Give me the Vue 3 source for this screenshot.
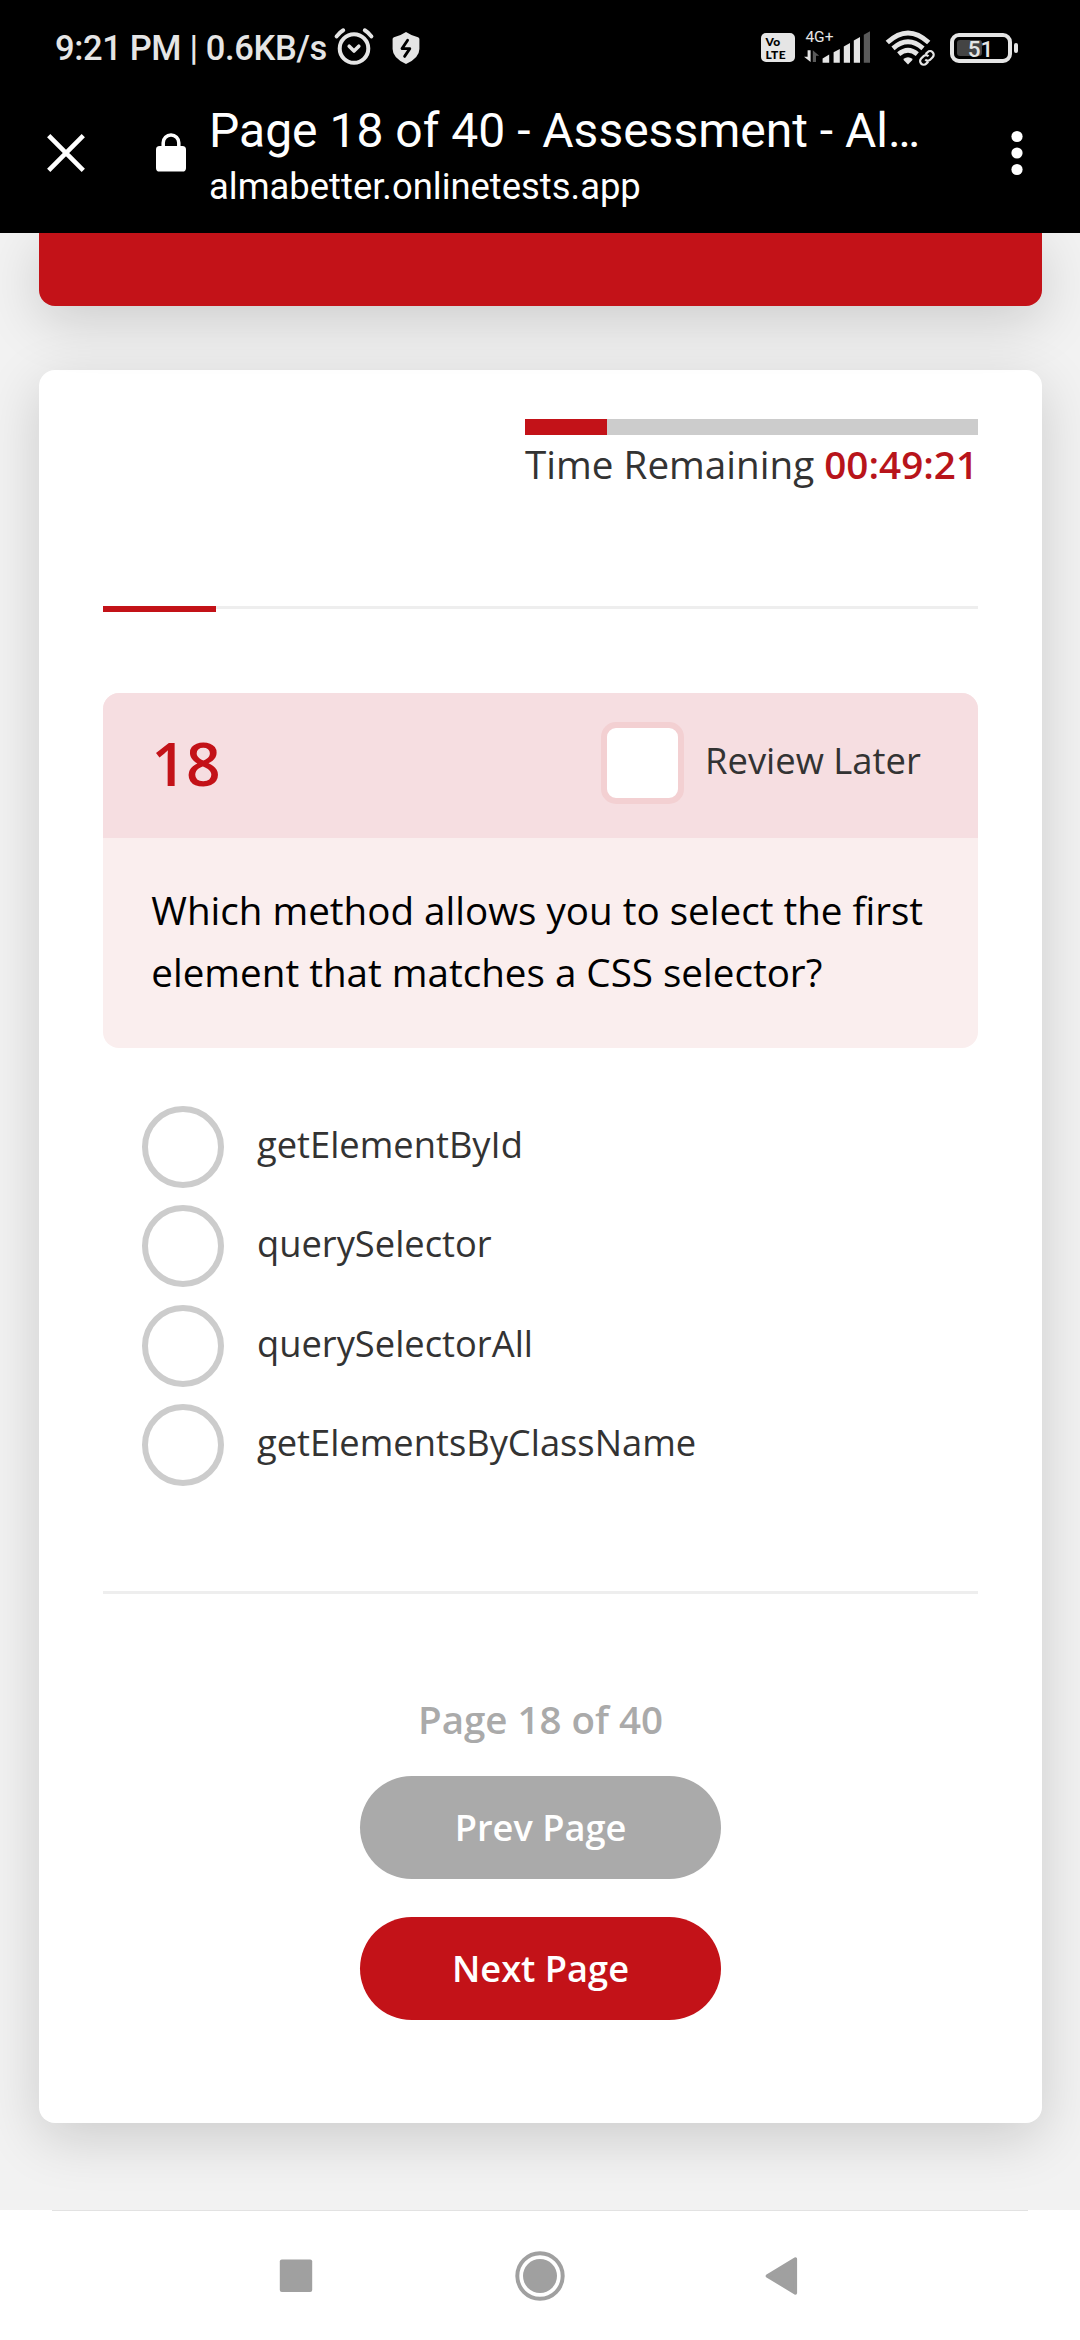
<script setup>
import { ref } from 'vue'

const page = 18
const total = 40
const picked = ref(null)
const reviewLater = ref(false)
const options = ['getElementById', 'querySelector', 'querySelectorAll', 'getElementsByClassName']
const timeUsed = 18.1
const progress = 12.9
</script>

<template>
  <div class="screen">
    <header class="chrome">
      <div class="status">
        <span class="clock">9:21 PM | 0.6KB/s</span>
        <svg class="alarm" width="42" height="40" viewBox="0 0 42 40" fill="none" stroke="#e5e5e5" stroke-width="4" stroke-linecap="round" stroke-linejoin="round">
          <circle cx="21" cy="22.5" r="14.3" />
          <path d="M3.6 10.4Q6.5 6.5 10.2 4.3M38.4 10.4Q35.5 6.5 31.8 4.3" />
          <path d="M16.2 20.2l4.8 4.8 4.8-4.8" stroke-width="3.6" />
        </svg>
        <svg class="shield" width="28" height="34" viewBox="0 0 28 34">
          <path d="M14 1Q20 5 26 6.2Q27.4 6.6 27.4 8V18Q27.4 27 14 33Q.6 27 .6 18V8Q.6 6.6 2 6.2Q8 5 14 1Z" fill="#e5e5e5" />
          <path d="M15.6 9.2L10 17.6h7.8L12.6 25.4" fill="none" stroke="#000" stroke-width="2.8" stroke-linecap="round" stroke-linejoin="round" />
        </svg>
        <span class="spacer"></span>
        <span class="volte"><b>Vo</b><b>LTE</b></span>
        <svg class="signal" width="68" height="36" viewBox="0 0 68 36">
          <text x="1.4" y="14.4" font-family="Roboto, sans-serif" font-size="15.5" fill="#e5e5e5">4G+</text>
          <path d="M3.6 22.2h3V34L0 28.8h3.6z" fill="#e5e5e5" />
          <path d="M8.8 22.2l6.4 5.6h-3.2V34H8.8z" fill="#5a5a5a" />
          <g fill="#e5e5e5">
            <path d="M18.6 34.7V30.4l6.6-4v8.3z" />
            <path d="M29.6 34.7V24.2l6.2-3.2v13.7z" />
            <path d="M39.8 34.7V18.4l6.2-3.4v19.7z" />
            <path d="M49.8 34.7V12.4l6.2-3.4v25.7z" />
          </g>
          <path d="M59.8 34.7V6.8l6.2-3.6v31.5z" fill="#5a5a5a" />
        </svg>
        <svg class="wifi" width="51" height="36" viewBox="0 0 51 36" fill="none" stroke="#e5e5e5">
          <path d="M2.3 12.6Q23 -6.6 43.7 12.6" stroke-width="4.8" />
          <path d="M8 18.4Q23 5.2 38 18.4" stroke-width="4.8" />
          <path d="M13.7 24.2Q23 16.4 32.3 24.2" stroke-width="4.8" />
          <path d="M18.6 28.8Q23 25.8 27.4 28.8V30L23 34.4L18.6 30z" fill="#e5e5e5" stroke="none" />
          <g stroke="#000" stroke-width="6" >
            <rect x="-7.5" y="-3.6" width="9.6" height="7.2" rx="3.6" transform="translate(42 28) rotate(-45)" />
            <rect x="-1.6" y="-3.6" width="9.6" height="7.2" rx="3.6" transform="translate(42 28) rotate(-45)" />
          </g>
          <g stroke-width="2.2">
            <path d="M1 -3.6h2.8a3.6 3.6 0 0 1 0 7.2h-3.8a3.6 3.6 0 0 1-3-3.6" transform="translate(42.4 27.4) rotate(-45)" />
            <path d="M-1 3.6h-2.8a3.6 3.6 0 0 1 0-7.2h3.8a3.6 3.6 0 0 1 3 3.6" transform="translate(41.4 28.4) rotate(-45)" />
          </g>
        </svg>
        <svg class="battery" width="69" height="30" viewBox="0 0 69 30">
          <rect x="2" y="2" width="58" height="26" rx="7" fill="none" stroke="#e5e5e5" stroke-width="4" />
          <rect x="7" y="7" width="25" height="16" rx="3" fill="#444" />
          <rect x="64" y="10" width="4" height="10" rx="2" fill="#e5e5e5" />
          <text x="30.5" y="24" text-anchor="middle" font-family="Roboto, sans-serif" font-weight="500" font-size="22.5" fill="#e5e5e5">51</text>
        </svg>
      </div>

      <div class="toolbar">
        <svg class="close" width="38" height="38" viewBox="0 0 38 38" stroke="#fff" stroke-width="4.6">
          <path d="M1.7 1.7L36.3 36.3M36.3 1.7L1.7 36.3" />
        </svg>
        <svg class="lock" width="30" height="39" viewBox="0 0 30 39">
          <path d="M7.2 14.5V9.8a7.8 7.8 0 0 1 15.6 0v4.7" fill="none" stroke="#fff" stroke-width="3.5" />
          <rect x="0" y="13" width="30" height="25.5" rx="3.6" fill="#fff" />
        </svg>
        <div class="titles">
          <div class="title">Page 18 of 40 - Assessment - Al…</div>
          <div class="url">almabetter.onlinetests.app</div>
        </div>
        <svg class="menu" width="12" height="46" viewBox="0 0 12 46" fill="#fff">
          <circle cx="6" cy="6.5" r="5.6" /><circle cx="6" cy="23" r="5.6" /><circle cx="6" cy="39.5" r="5.6" />
        </svg>
      </div>
    </header>

    <main class="page">
      <section class="banner"></section>

      <section class="card">
        <div class="timer">
          <div class="timer-track"><div class="timer-fill" :style="{ width: timeUsed + '%' }"></div></div>
          <div class="timer-text">Time Remaining <strong>00:49:21</strong></div>
        </div>

        <div class="progress"><div class="progress-fill" :style="{ width: progress + '%' }"></div></div>

        <div class="question">
          <div class="question-head">
            <span class="number">{{ page }}</span>
            <label class="review">
              <input v-model="reviewLater" type="checkbox" class="box" />
              <span class="review-text">Review Later</span>
            </label>
          </div>
          <p class="question-text">Which method allows you to select the first<br />element that matches a CSS selector?</p>
        </div>

        <div class="options">
          <label v-for="option in options" :key="option" class="option">
            <input v-model="picked" type="radio" name="answer" :value="option" class="radio" />
            <span class="option-text">{{ option }}</span>
          </label>
        </div>

        <div class="pager">
          <div class="pager-label">Page {{ page }} of {{ total }}</div>
          <button class="btn prev">Prev Page</button>
          <button class="btn next">Next Page</button>
        </div>
      </section>
    </main>

    <nav class="navbar">
      <div class="nav-line"></div>
      <div class="nav-icons">
        <svg width="34" height="50" viewBox="0 0 34 50"><rect x="0.8" y="8.6" width="32.4" height="32.4" rx="2" fill="#a0a0a0" /></svg>
        <svg width="50" height="50" viewBox="0 0 50 50">
          <circle cx="25" cy="25" r="22.7" fill="none" stroke="#a0a0a0" stroke-width="4" />
          <circle cx="25" cy="25" r="17" fill="#a0a0a0" />
        </svg>
        <svg width="34" height="50" viewBox="0 0 34 50"><path d="M2.4 25L30.4 8V42z" fill="#a0a0a0" stroke="#a0a0a0" stroke-width="3.4" stroke-linejoin="round" /></svg>
      </div>
    </nav>
  </div>
</template>

<style>
body {
  margin: 0;
  background: #fff;
}
</style>

<style scoped>
.screen {
  width: 1080px;
  height: 2340px;
  display: flex;
  flex-direction: column;
  overflow: hidden;
  font-family: 'Open Sans', 'Noto Sans', sans-serif;
  color: #333;
}

.chrome {
  height: 233px;
  flex: none;
  background: #000;
  color: #fff;
  font-family: Roboto, sans-serif;
}

.status {
  display: flex;
  align-items: flex-start;
  height: 96px;
  box-sizing: border-box;
  padding: 26px 61.5px 0 55px;
}

.clock {
  width: 277.5px;
  line-height: 44px;
  font-size: 34.5px;
  font-weight: 500;
  letter-spacing: -0.36px;
  color: #e5e5e5;
  white-space: nowrap;
}

.spacer {
  flex: 1;
}

.shield {
  margin: 5px 0 0 17px;
}

.volte {
  width: 34px;
  height: 29px;
  margin: 7px 9px 0 0;
  box-sizing: border-box;
  padding: 2px 0 0 5px;
  border-radius: 5px;
  background: #e5e5e5;
  color: #000;
  display: flex;
  flex-direction: column;
  font: 900 12px/13px Lato, sans-serif;
  letter-spacing: 0.4px;
}

.volte b {
  font-weight: 900;
  height: 13px;
}

.signal {
  margin: 2px 13px 0 0;
}

.wifi {
  margin: 4px 14px 0 0;
}

.battery {
  margin-top: 6.5px;
}

.toolbar {
  display: flex;
  align-items: flex-start;
  padding: 0 57px 0 47px;
}

.close {
  margin-top: 38px;
}

.lock {
  margin: 36.5px 0 0 71px;
}

.titles {
  flex: 1;
  margin-left: 23px;
}

.title {
  height: 68px;
  line-height: 70px;
  font-size: 48px;
  white-space: nowrap;
}

.url {
  height: 46px;
  line-height: 46px;
  font-size: 36.4px;
  white-space: nowrap;
}

.menu {
  margin-top: 34px;
}

.page {
  height: 1977px;
  flex: none;
  background: #f2f2f2;
  overflow: hidden;
  padding: 0 38px 0 39px;
  display: flex;
  flex-direction: column;
  box-sizing: border-box;
}

.banner,
.card {
  box-shadow: 0 15px 56px rgba(0, 0, 0, 0.16);
}

.banner {
  position: relative;
  z-index: 1;
  flex: none;
  height: 73px;
  margin-bottom: 64px;
  border-radius: 0 0 16px 16px;
  background: #c31218;
}

.card {
  height: 1753px;
  flex: none;
  box-sizing: border-box;
  padding: 49px 64px 0;
  border-radius: 16px;
  background: #fff;
  display: flex;
  flex-direction: column;
}

.timer {
  align-self: flex-end;
  width: 453px;
  height: 187px;
}

.timer-track {
  height: 16px;
  background: #ccc;
}

.timer-fill {
  height: 100%;
  background: #c31218;
}

.timer-text {
  margin-top: 1px;
  height: 56px;
  line-height: 56px;
  font-size: 38.65px;
  white-space: nowrap;
}

.timer-text strong {
  font-weight: 600;
  color: #b8141b;
}

.progress {
  height: 3px;
  background: #eee;
  margin-bottom: 84px;
}

.progress-fill {
  height: 6px;
  background: #c31218;
}

.question {
  height: 355px;
  flex: none;
  border-radius: 16px;
  overflow: hidden;
  background: #faeeee;
}

.question-head {
  height: 145px;
  box-sizing: border-box;
  display: flex;
  justify-content: space-between;
  padding: 29px 58px 0 48.5px;
  background: #f6dee1;
}

.number {
  line-height: 82px;
  font-size: 60.5px;
  font-weight: 600;
  color: #c31218;
}

.review {
  display: flex;
  width: 319px;
}

.box,
.radio {
  appearance: none;
  flex: none;
  margin: 0;
  box-sizing: border-box;
  background: #fff;
}

.box {
  width: 83px;
  height: 82px;
  border: 6px solid #f3d0d2;
  border-radius: 15px;
}

.review-text {
  margin-left: 21px;
  line-height: 76px;
  font-size: 36.4px;
  white-space: nowrap;
}

.question-text {
  margin: 0;
  padding: 41px 0 0 48.3px;
  line-height: 62px;
  font-size: 38.6px;
  color: #000;
  white-space: nowrap;
}

.options {
  height: 485px;
  flex: none;
  box-sizing: border-box;
  padding: 58px 0 0 39px;
  display: flex;
  flex-direction: column;
  gap: 17.33px;
}

.option {
  display: flex;
  height: 82px;
}

.radio {
  width: 82px;
  height: 82px;
  border: 6px solid #ccc;
  border-radius: 50%;
}

.option-text {
  margin-left: 33px;
  line-height: 76px;
  font-size: 36.3px;
}

.pager {
  margin-top: 58px;
  border-top: 3px solid #eee;
  display: flex;
  flex-direction: column;
  align-items: center;
  padding-top: 98px;
}

.pager-label {
  height: 84px;
  line-height: 54px;
  font-size: 38.5px;
  font-weight: 600;
  color: #aaa;
}

.btn {
  width: 361px;
  height: 103px;
  flex: none;
  margin: 0 0 38px;
  padding: 0 0 2px;
  border: 0;
  border-radius: 52px;
  color: #fff;
  font: 600 36.2px/100px 'Open Sans', 'Noto Sans', sans-serif;
}

.prev {
  background: #aaa;
}

.next {
  background: #c31218;
}

.navbar {
  height: 130px;
  flex: none;
  background: #fff;
}

.nav-line {
  height: 1px;
  margin: 0 52px;
  background: #e2e2e2;
}

.nav-icons {
  display: flex;
  justify-content: space-between;
  padding: 39.5px 281px 0 279px;
}

.nav-icons svg:nth-child(2) {
  margin-left: 2px;
}
</style>
